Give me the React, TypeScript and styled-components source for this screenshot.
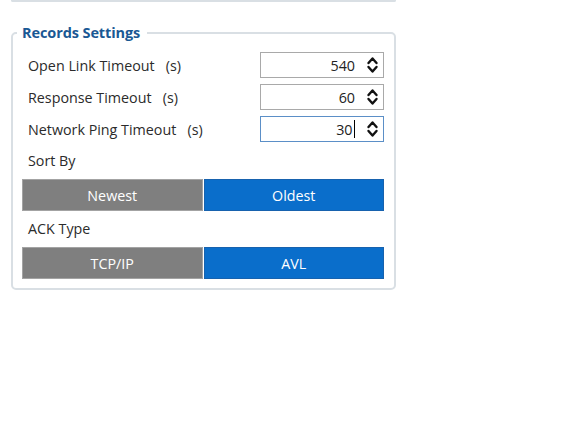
import React from "react";
import styled, { createGlobalStyle } from "styled-components";

const GlobalStyle = createGlobalStyle`
  body {
    margin: 0;
    background: #ffffff;
    font-family: "Open Sans", "Noto Sans", sans-serif;
  }
`;

const Page = styled.div`
  width: 564px;
  height: 429px;
  padding-left: 11px;
  box-sizing: border-box;
`;

const PrevPanel = styled.div`
  width: 385px;
  height: 1px;
  box-sizing: border-box;
  border: 2px solid #d9dfe4;
  border-top: none;
  border-radius: 0 0 4px 4px;
  margin-bottom: 21px;
`;

const Fieldset = styled.fieldset`
  width: 385px;
  box-sizing: border-box;
  margin: 0;
  padding: 10px 10px 9px 9px;
  border: 2px solid #d9dfe4;
  border-radius: 5px;
`;

const Legend = styled.legend`
  padding: 0 7px 0 5px;
  margin-left: -5px;
  color: #1a5894;
  font-size: 14.5px;
  font-weight: 700;
  letter-spacing: -0.1px;
`;

const Row = styled.div`
  display: flex;
  align-items: center;
  justify-content: space-between;
  height: 26px;
  margin-bottom: 6px;
`;

const Label = styled.span`
  padding-left: 6px;
  color: #2b2b2b;
  font-size: 14.3px;
  white-space: pre;
`;

const SectionLabel = styled(Label)`
  display: block;
  height: 26px;
  line-height: 26px;
  margin-bottom: 5px;
`;

const NumberBox = styled.div<{ $focused?: boolean }>`
  width: 124px;
  height: 26px;
  box-sizing: border-box;
  display: flex;
  align-items: center;
  justify-content: flex-end;
  border: 1px solid ${(p) => (p.$focused ? "#5b8fc7" : "#a9a9a9")};
  padding-right: 4px;
  color: #222;
  font-size: 14.3px;
`;

const Value = styled.span`
  display: flex;
  align-items: center;
  margin-right: 11px;
`;

const Caret = styled.span`
  display: inline-block;
  width: 1.5px;
  height: 18px;
  background: #000;
  margin-left: 1px;
`;

const ToggleGroup = styled.div`
  display: flex;
  gap: 1px;
  margin-bottom: 5px;
  &:last-child {
    margin-bottom: 0;
  }
`;

const ToggleButton = styled.div<{ $active?: boolean }>`
  flex: 1;
  height: 32px;
  box-sizing: border-box;
  display: flex;
  align-items: center;
  justify-content: center;
  background: ${(p) => (p.$active ? "#0a6ecb" : "#7f7f7f")};
  border: 1px solid ${(p) => (p.$active ? "#1762ae" : "#a3a3a3")};
  color: #ffffff;
  font-size: 14.3px;
`;

const Spinner = () => (
  <svg width="13" height="20" viewBox="0 0 13 20">
    <path d="M2.5 8 L6.5 3.5 L10.5 8" fill="none" stroke="#111" strokeWidth="2.4" strokeLinecap="round" strokeLinejoin="round" />
    <path d="M2.5 12 L6.5 16.5 L10.5 12" fill="none" stroke="#111" strokeWidth="2.4" strokeLinecap="round" strokeLinejoin="round" />
  </svg>
);

const fields = [
  { label: "Open Link Timeout   (s)", value: "540" },
  { label: "Response Timeout   (s)", value: "60" },
  { label: "Network Ping Timeout   (s)", value: "30", focused: true },
];

export default function App() {
  return (
    <>
      <GlobalStyle />
      <Page>
        <PrevPanel />
        <Fieldset>
          <Legend>Records Settings</Legend>
          {fields.map((f) => (
            <Row key={f.label}>
              <Label>{f.label}</Label>
              <NumberBox $focused={f.focused}>
                <Value>
                  {f.value}
                  {f.focused && <Caret />}
                </Value>
                <Spinner />
              </NumberBox>
            </Row>
          ))}
          <SectionLabel>Sort By</SectionLabel>
          <ToggleGroup>
            <ToggleButton>Newest</ToggleButton>
            <ToggleButton $active>Oldest</ToggleButton>
          </ToggleGroup>
          <SectionLabel>ACK Type</SectionLabel>
          <ToggleGroup>
            <ToggleButton>TCP/IP</ToggleButton>
            <ToggleButton $active>AVL</ToggleButton>
          </ToggleGroup>
        </Fieldset>
      </Page>
    </>
  );
}
